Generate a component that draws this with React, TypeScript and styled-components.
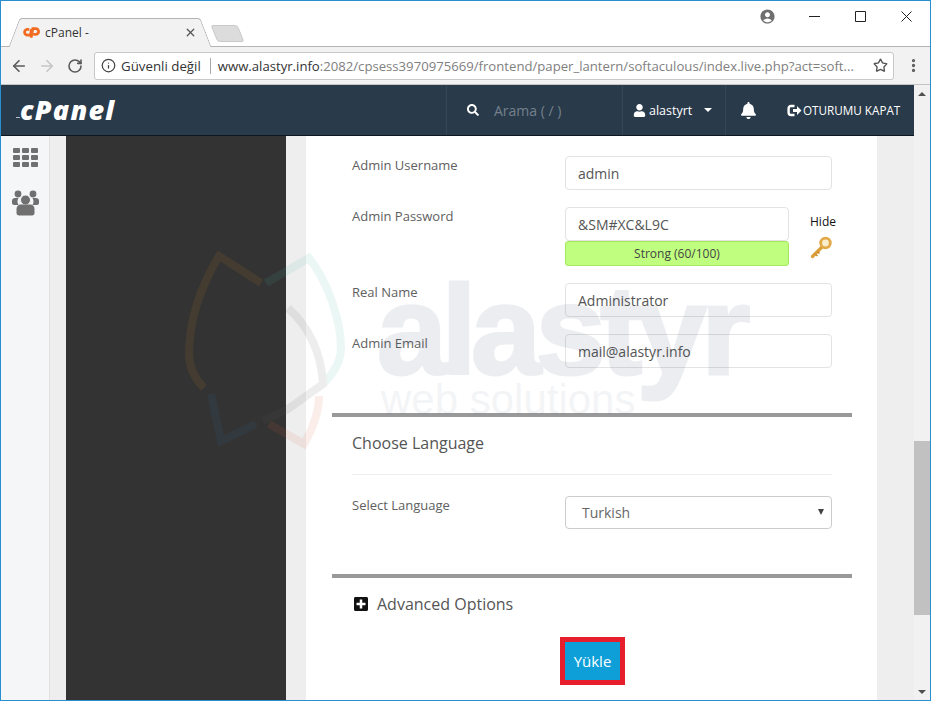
import styled, { createGlobalStyle } from 'styled-components';
import { ArrowLeft, ArrowRight, EllipsisVertical, Info, RotateCw, Star, X } from 'lucide-react';
import { FaBell, FaPlusSquare, FaSearch, FaUser } from 'react-icons/fa';
import { MdAccountCircle } from 'react-icons/md';

const GlobalStyle = createGlobalStyle`
  html, body { margin: 0; padding: 0; height: 100%; overflow: hidden; }
  body { font-family: "Open Sans", "Liberation Sans", sans-serif; background: #fff; }
  * { box-sizing: border-box; }
`;

const Window = styled.div`
  position: relative;
  width: 931px;
  height: 701px;
  display: flex;
  flex-direction: column;
  border: 1px solid #2a8fd0;
  overflow: hidden;
`;

const TitleBar = styled.div`
  display: flex;
  align-items: flex-end;
  height: 46px;
  flex: none;
  padding-left: 7px;
  background: #fff;
  border-bottom: 1px solid #b4b4b4;
`;

const Tab = styled.div`
  position: relative;
  width: 204px;
  height: 29px;
  margin-bottom: -1px;
  display: flex;
  align-items: center;
  padding: 0 15px 0 15px;
  gap: 5px;
  z-index: 1;
  font-size: 12px;
  color: #333;

  &::before,
  &::after {
    content: '';
    position: absolute;
    top: 0;
    bottom: 0;
    width: 60%;
    background: #f2f2f2;
    border-top: 1px solid #b4b4b4;
    z-index: -1;
  }
  &::before {
    left: 6px;
    transform: skewX(-21deg);
    border-left: 1px solid #b4b4b4;
    border-top-left-radius: 3px;
  }
  &::after {
    right: 6px;
    transform: skewX(21deg);
    border-right: 1px solid #b4b4b4;
    border-top-right-radius: 3px;
  }
`;

const TabTitle = styled.span`
  flex: 1;
`;

const NewTab = styled.div`
  width: 27px;
  height: 17px;
  margin: 0 0 4px 2px;
  background: #dcdcdc;
  border: 1px solid #c9c9c9;
  border-radius: 3px;
  transform: skewX(22deg);
`;

const WindowControls = styled.div`
  margin-left: auto;
  align-self: flex-start;
  display: flex;
  align-items: center;
  height: 30px;
  padding-right: 1px;
  color: #222;
`;

const ControlSlot = styled.div`
  width: 46px;
  display: flex;
  justify-content: center;
  align-items: center;
`;

const ProfileSlot = styled.div`
  display: flex;
  margin-right: 15px;
  color: #6f6f6f;
`;

const Toolbar = styled.div`
  display: flex;
  align-items: center;
  height: 38px;
  flex: none;
  background: #f2f2f2;
  border-bottom: 1px solid #c4c4c4;
  padding: 0 8px 0 4px;
`;

const NavButton = styled.div<{ $faded?: boolean }>`
  width: 28px;
  display: flex;
  justify-content: center;
  color: ${(p) => (p.$faded ? '#c6c6c6' : '#5a5a5a')};
`;

const AddressBar = styled.div`
  flex: 1;
  height: 28px;
  margin-left: 5px;
  display: flex;
  align-items: center;
  background: #fff;
  border: 1px solid #c8c8c8;
  border-radius: 3px;
  padding: 0 5px 0 6px;
  font-size: 13.3px;
  white-space: nowrap;
  overflow: hidden;
`;

const Security = styled.span`
  display: flex;
  align-items: center;
  gap: 5px;
  color: #333;
  padding-right: 9px;
  margin-right: 7px;
  border-right: 1px solid #aaa;
  line-height: 16px;
`;

const UrlHost = styled.span`
  color: #333;
  font-size: 13.15px;
`;

const UrlRest = styled.span`
  flex: 1;
  color: #808080;
  font-size: 13.15px;
`;

const MenuDots = styled.div`
  width: 30px;
  display: flex;
  justify-content: center;
  color: #5a5a5a;
  margin: 0 -6px 0 4px;
`;

const Main = styled.div`
  flex: 1;
  display: flex;
  min-height: 0;
`;

const Page = styled.div`
  flex: 1;
  display: flex;
  flex-direction: column;
  min-width: 0;
`;

const Header = styled.header`
  height: 51px;
  flex: none;
  display: flex;
  align-items: center;
  background: #293a4a;
  border-bottom: 1px solid #10181f;
  color: #fff;
`;

const Logo = styled.div`
  position: relative;
  width: 445px;
  padding-left: 19px;
  font-style: italic;
  font-weight: 800;
  font-size: 27px;
  line-height: 30px;
  letter-spacing: 1.2px;

  &::before {
    content: '';
    position: absolute;
    left: 15px;
    top: 22px;
    width: 4px;
    height: 1px;
    background: #b9c0c7;
  }
`;

const SearchBox = styled.div`
  width: 177px;
  height: 100%;
  display: flex;
  align-items: center;
  gap: 15px;
  padding-left: 20px;
  border-left: 1px solid #34475a;
  border-right: 1px solid #34475a;
  font-size: 14px;
  color: #74818d;
`;

const UserMenu = styled.div`
  width: 103px;
  height: 100%;
  display: flex;
  align-items: center;
  padding-left: 10px;
  gap: 3px;
  border-right: 1px solid #34475a;
  font-size: 12.5px;
`;

const Caret = styled.span`
  width: 0;
  height: 0;
  margin-left: 9px;
  border-left: 4px solid transparent;
  border-right: 4px solid transparent;
  border-top: 4px solid #fff;
`;

const BellSlot = styled.div`
  width: 44px;
  display: flex;
  justify-content: center;
`;

const Logout = styled.div`
  display: flex;
  align-items: center;
  gap: 1px;
  margin-left: 17px;
  font-size: 11.7px;
  white-space: nowrap;
`;

const Body = styled.div`
  flex: 1;
  display: flex;
  min-height: 0;
  background: #eeeeee;
`;

const Sidebar = styled.nav`
  width: 49px;
  flex: none;
  display: flex;
  flex-direction: column;
  align-items: center;
  gap: 23px;
  padding-top: 12px;
  background: #f5f6f8;
  border-right: 1px solid #e2e2e2;
`;

const DarkColumn = styled.div`
  width: 220px;
  flex: none;
  margin: 0 20px 0 16px;
  background: #333333;
`;

const Card = styled.main`
  width: 571px;
  flex: none;
  padding: 20px 25px 0 26px;
  background: #fff;
`;

const Row = styled.div`
  display: flex;
  padding: 0 20px;
  margin-bottom: 17px;
  &:last-of-type { margin-bottom: 0; }
`;

const Label = styled.label`
  width: 213px;
  flex: none;
  font-size: 13px;
  font-weight: 500;
  line-height: 19px;
  color: #606060;
`;

const Input = styled.div`
  height: 34px;
  display: flex;
  align-items: center;
  padding: 0 12px;
  background: rgba(255, 255, 255, 0.72);
  border: 1px solid #e3e3e3;
  border-radius: 4px;
  font-size: 14px;
  color: #555;
`;

const FullField = styled(Input)`
  width: 267px;
`;

const PasswordBlock = styled.div`
  width: 224px;
  flex: none;
`;

const Meter = styled.div`
  height: 25px;
  display: flex;
  align-items: center;
  justify-content: center;
  background: #bffe7e;
  border: 1px solid #a5e85f;
  border-radius: 3px;
  font-size: 12px;
  color: #444;
`;

const HideColumn = styled.div`
  flex: none;
  margin-left: 21px;
  padding-top: 6px;
  display: flex;
  flex-direction: column;
  gap: 6px;
  font-size: 12px;
  font-weight: 500;
  color: #111;
`;

const Divider = styled.hr<{ $top: number }>`
  height: 4px;
  margin: ${(p) => p.$top}px 0 0;
  border: 0;
  background: #999;
`;

const SectionTitle = styled.h2`
  margin: 15px 20px 0;
  padding-bottom: 20px;
  font-size: 16px;
  font-weight: 400;
  line-height: 22px;
  color: #555;
  border-bottom: 1px solid #eee;
`;

const LanguageRow = styled(Row)`
  margin: 21px 0 0;
`;

const Select = styled(FullField)`
  height: 33px;
  position: relative;
  padding-left: 16px;
  border-color: #ccc;
  color: #666;
  &::after {
    content: '';
    position: absolute;
    right: 7px;
    top: 12px;
    border-left: 3px solid transparent;
    border-right: 3px solid transparent;
    border-top: 6px solid #444;
  }
`;

const Advanced = styled.div`
  display: flex;
  align-items: center;
  gap: 8px;
  margin: 15px 20px 0 21px;
  height: 22px;
  font-size: 16px;
  color: #555;
  svg { color: #111; }
`;

const Submit = styled.button`
  display: block;
  width: 65px;
  height: 48px;
  margin: 22px 0 0 228px;
  padding: 0;
  background: #0e9fd8;
  border: 5px solid #e71f2c;
  font-family: inherit;
  font-size: 15px;
  color: #fff;
`;

const Scrollbar = styled.div`
  width: 16px;
  flex: none;
  position: relative;
  background: #f1f1f1;
`;

const ScrollThumb = styled.div`
  position: absolute;
  top: 356px;
  left: 0;
  right: 0;
  height: 174px;
  background: #c1c1c1;
`;

const ScrollArrow = styled.span<{ $down?: boolean }>`
  position: absolute;
  left: 4px;
  ${(p) => (p.$down ? 'bottom: 6px;' : 'top: 7px;')}
  border-left: 4px solid transparent;
  border-right: 4px solid transparent;
  ${(p) => (p.$down ? 'border-top: 4px solid #505050;' : 'border-bottom: 4px solid #505050;')}
`;

const Watermark = styled.div`
  position: absolute;
  left: 376px;
  top: 260px;
  pointer-events: none;
  font-family: "Liberation Sans", sans-serif;
  color: #2d3c5f;
  opacity: 0.085;
`;

const WatermarkName = styled.div`
  font-size: 126px;
  font-weight: 700;
  letter-spacing: -5.5px;
  line-height: 140px;
  -webkit-text-stroke: 3px #2d3c5f;
`;

const WatermarkTag = styled.div`
  margin: -24px 0 0 4px;
  font-size: 42px;
  line-height: 46px;
  opacity: 0.6;
`;

const LeafMark = styled.svg`
  position: absolute;
  left: 182px;
  top: 250px;
  pointer-events: none;
`;

const CpanelFavicon = () => (
  <svg width="17" height="13" viewBox="0 0 16 12" fill="none" stroke="#f26b21" strokeWidth="2.6">
    <path d="M6 3H4.2a2.7 2.7 0 0 0 0 5.4H7L8 3" />
    <path d="M7.6 11 9.2 2.4H12a2.7 2.7 0 0 1 0 5.4H9.6" />
  </svg>
);

const KeyIcon = () => (
  <svg width="23" height="23" viewBox="0 0 23 23" fill="none">
    <path d="M12 11 2.5 20.5" stroke="#dba03a" strokeWidth="3.2" strokeLinecap="round" />
    <path d="M5 18l2.5 2M7.5 15.5l2 2" stroke="#c98a27" strokeWidth="1.6" />
    <circle cx="15.5" cy="7" r="4.8" stroke="#e2a946" strokeWidth="2.8" fill="#f8eecb" />
  </svg>
);

const LogoutIcon = () => (
  <svg width="15" height="13" viewBox="0 0 15 13" fill="none">
    <path d="M7.5 2H4a2.4 2.4 0 0 0-2.4 2.4v4.2A2.4 2.4 0 0 0 4 11h3.5" stroke="#fff" strokeWidth="2.4" />
    <path d="M6 5h4V2l4.5 4.5L10 11V8H6z" fill="#fff" />
  </svg>
);

const GridIcon = () => (
  <svg width="25" height="19" viewBox="0 0 25 19" fill="#707070">
    {[0, 9, 18].map((x) =>
      [0, 7, 14].map((y) => <rect key={`${x}-${y}`} x={x} y={y} width="7" height="5" rx="1" />),
    )}
  </svg>
);

const UsersIcon = () => (
  <svg width="27" height="26" viewBox="0 0 27 26" fill="#707070">
    <circle cx="6" cy="4" r="3.4" />
    <circle cx="21" cy="4" r="3.4" />
    <path d="M0 10.5C0 9 1.5 8 3 8h3.5a7 7 0 0 0 0 7H2c-1 0-2-.8-2-2zM27 10.5C27 9 25.500 8 24 8h-3.500a7 7 0 0 1 0 7H25c1 0 2-.8 2-2z" />
    <circle cx="13.500" cy="10" r="5" stroke="#f5f6f8" strokeWidth="1" />
    <path d="M4.500 19c0-3 2-4.500 4-4.500h10c2 0 4 1.500 4 4.500v4c0 1.500-1 2.500-2.500 2.500H7c-1.500 0-2.500-1-2.500-2.500z" />
  </svg>
);

const App = () => (
  <>
    <GlobalStyle />
    <Window>
      <TitleBar>
        <Tab>
          <CpanelFavicon />
          <TabTitle>cPanel -</TabTitle>
          <X size={13} strokeWidth={2.4} color="#555" />
        </Tab>
        <NewTab />
        <WindowControls>
          <ProfileSlot>
            <MdAccountCircle size={17} />
          </ProfileSlot>
          <ControlSlot>
            <svg width="11" height="11" viewBox="0 0 11 11"><path d="M0 5.5h11" stroke="#222" /></svg>
          </ControlSlot>
          <ControlSlot>
            <svg width="11" height="11" viewBox="0 0 11 11"><path d="M.5.5h10v10H.5z" fill="none" stroke="#222" /></svg>
          </ControlSlot>
          <ControlSlot>
            <svg width="11" height="11" viewBox="0 0 11 11"><path d="M.5.5l10 10M10.5.5l-10 10" stroke="#222" /></svg>
          </ControlSlot>
        </WindowControls>
      </TitleBar>
      <Toolbar>
        <NavButton><ArrowLeft size={18} strokeWidth={2.2} /></NavButton>
        <NavButton $faded><ArrowRight size={18} strokeWidth={2.2} /></NavButton>
        <NavButton><RotateCw size={16} strokeWidth={2.4} /></NavButton>
        <AddressBar>
          <Security>
            <Info size={15} strokeWidth={2} color="#444" />
            Güvenli değil
          </Security>
          <UrlHost>www.alastyr.info</UrlHost>
          <UrlRest>:2082/cpsess3970975669/frontend/paper_lantern/softaculous/index.live.php?act=soft...</UrlRest>
          <Star size={15} strokeWidth={2.2} color="#555" />
        </AddressBar>
        <MenuDots><EllipsisVertical size={17} strokeWidth={2.6} /></MenuDots>
      </Toolbar>
      <Main>
        <Page>
          <Header>
            <Logo>cPanel</Logo>
            <SearchBox>
              <FaSearch size={12} color="#fff" />
              Arama ( / )
            </SearchBox>
            <UserMenu>
              <FaUser size={13} />
              alastyrt
              <Caret />
            </UserMenu>
            <BellSlot><FaBell size={17} /></BellSlot>
            <Logout>
              <LogoutIcon />
              OTURUMU KAPAT
            </Logout>
          </Header>
          <Body>
            <Sidebar>
              <GridIcon />
              <UsersIcon />
            </Sidebar>
            <DarkColumn />
            <Card>
              <Row>
                <Label>Admin Username</Label>
                <FullField>admin</FullField>
              </Row>
              <Row>
                <Label>Admin Password</Label>
                <PasswordBlock>
                  <Input>&amp;SM#XC&amp;L9C</Input>
                  <Meter>Strong (60/100)</Meter>
                </PasswordBlock>
                <HideColumn>
                  Hide
                  <KeyIcon />
                </HideColumn>
              </Row>
              <Row>
                <Label>Real Name</Label>
                <FullField>Administrator</FullField>
              </Row>
              <Row>
                <Label>Admin Email</Label>
                <FullField>mail@alastyr.info</FullField>
              </Row>
              <Divider $top={45} />
              <SectionTitle>Choose Language</SectionTitle>
              <LanguageRow>
                <Label>Select Language</Label>
                <Select>Turkish</Select>
              </LanguageRow>
              <Divider $top={45} />
              <Advanced>
                <FaPlusSquare size={16} />
                Advanced Options
              </Advanced>
              <Submit type="button">Yükle</Submit>
            </Card>
          </Body>
        </Page>
        <Scrollbar>
          <ScrollArrow />
          <ScrollThumb />
          <ScrollArrow $down />
        </Scrollbar>
      </Main>
      <LeafMark width="170" height="200" viewBox="0 0 170 200" fill="none" strokeWidth="8" opacity="0.1">
        <path d="M78 32 36 5C18 35 6 70 6 103c0 14 6 25 15 34" stroke="#d98a1e" />
        <path d="M83 32 126 7c18 22 32 62 32 90 0 14-8 26-18 36" stroke="#3fb8a2" />
        <path d="M105 57c20 18 33 43 35 76l-35 25-25 12" stroke="#5a5d66" />
        <path d="M28 143 38 190 73 173" stroke="#2a6da8" />
        <path d="M86 173 121 193c9-16 15-32 15-48" stroke="#e0593c" />
      </LeafMark>
      <Watermark>
        <WatermarkName>alastyr</WatermarkName>
        <WatermarkTag>web solutions</WatermarkTag>
      </Watermark>
    </Window>
  </>
);

export default App;
